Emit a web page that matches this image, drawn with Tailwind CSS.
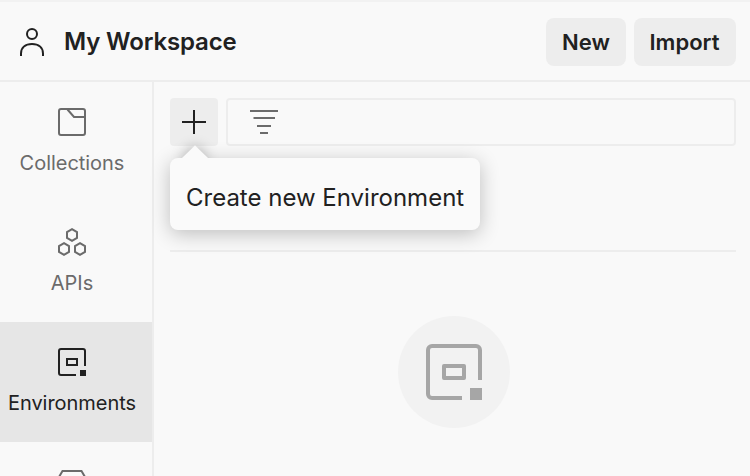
<!DOCTYPE html>
<html lang="en">
<head>
<meta charset="utf-8">
<title>My Workspace</title>
<script src="https://cdn.jsdelivr.net/npm/@tailwindcss/browser@4"></script>
</head>
<body class="h-[476px] w-[750px] overflow-hidden bg-[#f9f9f9] font-['Inter','Liberation_Sans',sans-serif] text-[#212121] antialiased">
<div class="flex h-full flex-col">
  <header class="flex h-[82px] shrink-0 items-center border-t-2 border-b-2 border-t-[#f2f2f2] border-b-[#ededed] pt-0.5 pr-[14px] pl-5">
    <svg class="h-7 w-6 shrink-0" viewBox="0 0 24 28" fill="none" stroke="currentColor" stroke-width="2"><circle cx="12" cy="6" r="5"/><path d="M1 28v-2.500C1 19.500 5.500 16 12 16s11 3.500 11 9.500V28"/></svg>
    <h1 class="ml-5 flex-1 text-[24px] leading-8 font-semibold tracking-[-0.14px]">My Workspace</h1>
    <div class="flex gap-2">
      <button class="h-12 w-20 rounded-lg bg-[#ededed] text-[22px] font-semibold">New</button>
      <button class="h-12 w-[102px] rounded-lg bg-[#ededed] pr-px text-[22px] font-semibold">Import</button>
    </div>
  </header>
  <div class="flex min-h-0 flex-1">
    <nav class="flex w-[154px] shrink-0 flex-col overflow-hidden border-r-2 border-[#ededed] text-[20px] leading-6 tracking-[-0.03px] text-[#6b6b6b]">
      <a class="flex h-[120px] shrink-0 flex-col items-center gap-[15px] pt-[26px] pr-2">
        <svg class="size-7" viewBox="0 0 28 28" fill="none" stroke="currentColor" stroke-width="2"><rect x="1" y="1" width="26" height="26" rx="2"/><path d="M9.500 1.500 16 9h11"/></svg>
        <span>Collections</span>
      </a>
      <a class="flex h-[120px] shrink-0 flex-col items-center gap-[15px] pt-[26px] pr-2">
        <svg class="size-7" viewBox="0 0 28 28" fill="none" stroke="currentColor" stroke-width="2"><path d="m14 1.200 5 2.900v5.800l-5 2.900-5-2.900V4.100zM6 15.200l5 2.900v5.800l-5 2.900-5-2.900v-5.800zM22 15.200l5 2.900v5.800l-5 2.900-5-2.900v-5.800z"/></svg>
        <span>APIs</span>
      </a>
      <a class="flex h-[120px] shrink-0 flex-col items-center gap-[15px] bg-[#e6e6e6] pt-[26px] pr-2 text-[#212121]">
        <svg class="size-7" viewBox="0 0 28 28" fill="none" stroke="currentColor" stroke-width="2"><path d="M27 18V3a2 2 0 0 0-2-2H3a2 2 0 0 0-2 2v22a2 2 0 0 0 2 2h15"/><rect x="9" y="11" width="10" height="6"/><path d="M22 22h6v6h-6z" fill="currentColor" stroke="none"/></svg>
        <span>Environments</span>
      </a>
      <a class="flex h-[120px] shrink-0 flex-col items-center pt-7 pr-2">
        <svg class="size-7" viewBox="0 0 28 28" fill="none" stroke="currentColor" stroke-width="2"><path d="M1 7 4.500 1h19L27 7v20H1z"/></svg>
      </a>
    </nav>
    <main class="flex flex-1 flex-col pt-4 pr-[14px] pl-4">
      <div class="flex gap-2">
        <div class="relative size-12">
          <button class="flex size-12 items-center justify-center rounded bg-[#ededed]">
            <svg class="size-6" viewBox="0 0 24 24" stroke="currentColor" stroke-width="2"><path d="M12 0v24M0 12h24"/></svg>
          </button>
          <div class="absolute top-[60px] left-0 z-10 w-[310px]">
            <div class="absolute -top-[9px] left-[16px] size-[18px] rotate-45 bg-[#fafafa] shadow-[0_0_14px_rgba(0,0,0,0.3)]"></div>
            <div class="relative flex h-[72px] items-center rounded-lg bg-[#fafafa] pt-2 pl-4 text-[24px] whitespace-nowrap shadow-[0_4px_20px_rgba(0,0,0,0.24)]">Create new Environment</div>
            <svg class="absolute -top-3 left-3 h-[13px] w-[26px]" viewBox="0 0 26 13" fill="#fafafa"><path d="M0 12 13 0l13 12v1H0z"/></svg>
          </div>
        </div>
        <div class="flex h-12 flex-1 items-center rounded border-2 border-[#ededed] pl-[22px] text-[#6b6b6b]">
          <svg class="h-6 w-7" viewBox="0 0 28 24" stroke="currentColor" stroke-width="2"><path d="M0 1h28M3.500 8h21.500M7 16h14M10 23h8"/></svg>
        </div>
      </div>
      <div class="mt-[104px] h-0.5 shrink-0 bg-[#ededed]"></div>
      <div class="mt-16 ml-[228px] flex size-28 shrink-0 items-center justify-center rounded-full bg-[#f2f2f2] text-[#a6a6a6]">
        <svg class="size-14" viewBox="0 0 28 28" fill="none" stroke="currentColor" stroke-width="2"><path d="M27 18V3a2 2 0 0 0-2-2H3a2 2 0 0 0-2 2v22a2 2 0 0 0 2 2h15"/><rect x="9" y="11" width="10" height="6" stroke-linejoin="round"/><path d="M22 22h6v6h-6z" fill="currentColor" stroke="none"/></svg>
      </div>
    </main>
  </div>
</div>
</body>
</html>
